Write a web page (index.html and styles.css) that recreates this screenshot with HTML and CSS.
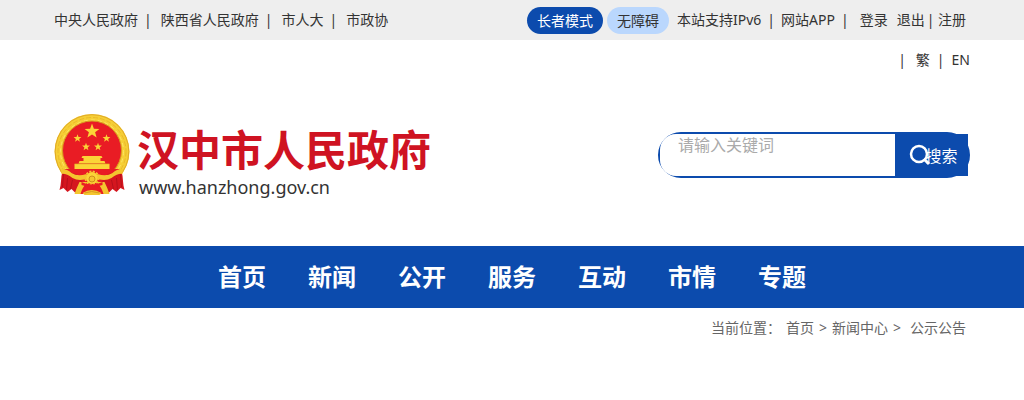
FILE: index.html
```
<!DOCTYPE html>
<html lang="zh-CN">
<head>
    <meta charset="UTF-8">
    <meta name="viewport" content="width=device-width, initial-scale=1.0">
    <title>汉中市人民政府</title>
    <link rel="stylesheet" href="styles.css">
</head>
<body>
    <!-- Top bar -->
    <div class="topbar">
        <div class="links">
            <a href="#">中央人民政府</a>
            <span class="sep">|</span>
            <a href="#">陕西省人民政府</a>
            <span class="sep">|</span>
            <a href="#">市人大</a>
            <span class="sep">|</span>
            <a href="#">市政协</a>
        </div>
        <div class="tools">
            <a class="pill pill-dark" href="#">长者模式</a>
            <a class="pill pill-light" href="#">无障碍</a>
            <div class="links">
                <a href="#">本站支持IPv6</a>
                <span class="bar">|</span>
                <a href="#">网站APP</a>
                <span class="bar">|</span>
            </div>
            <div class="user">
                <a href="#">登录</a>
                <a href="#">退出</a>
            </div>
            <div class="register">| <a href="#">注册</a></div>
        </div>
    </div>
    <div class="language">
        <span>|</span>
        <a class="traditional" href="#">繁</a>
        <span>|</span>
        <a href="#">EN</a>
    </div>

    <!-- Logo and search -->
    <header class="header">
        <a class="logo" href="#">
            <svg class="emblem" viewBox="0 0 76 82" aria-hidden="true">
                <!-- wheat ring -->
                <circle cx="37.500" cy="37.500" r="37.500" fill="#f6cf35"/>
                <circle cx="37.500" cy="37.500" r="36.800" fill="none" stroke="#e0a928"/>
                <circle cx="37.500" cy="37.500" r="34" fill="none" stroke="#ebb92c" stroke-dasharray="5 2"/>
                <circle cx="37.500" cy="37.500" r="31.500" fill="none" stroke="#fde566" stroke-dasharray="4 3"/>
                <circle cx="37.500" cy="36.500" r="29.500" fill="#e91c24" stroke="#d99a20"/>
                <!-- stars -->
                <g fill="#fbd437">
                    <path d="M37.500 9.500l1.900 5.200 5.500.2-4.300 3.400 1.500 5.300-4.600-3-4.600 3 1.500-5.300-4.300-3.400 5.500-.2z"/>
                    <path d="M23 20.300l1 2.700 2.900.1-2.300 1.800.8 2.800-2.400-1.600-2.400 1.600.8-2.800-2.300-1.800 2.900-.1z"/>
                    <path d="M52 20.300l1 2.700 2.900.1-2.300 1.800.8 2.800-2.400-1.600-2.400 1.600.8-2.800-2.300-1.800 2.900-.1z"/>
                    <path d="M31.500 28.800l1 2.700 2.900.1-2.300 1.800.8 2.800-2.400-1.600-2.400 1.600.8-2.800-2.300-1.800 2.900-.1z"/>
                    <path d="M43.500 28.800l1 2.700 2.900.1-2.300 1.800.8 2.800-2.400-1.600-2.400 1.600.8-2.800-2.300-1.800 2.900-.1z"/>
                    <!-- gate -->
                    <path d="M28 42h19l1 2H27zM29 44h17v3H29zM25 47h25l1 2.500H24zM20 50h35v5H20z"/>
                </g>
                <path d="M20 49.800h35" stroke="#d99a20" stroke-width=".6"/>
                <!-- ribbons -->
                <path d="M10 55h55v5L53 72v8H22v-8L10 60z" fill="#e91c24"/>
                <path d="M8 57C6 64 7 70 5 76l4-2 4 4 4-3 5 5 6-12-6-8zM67 57c2 7 1 13 3 19l-4-2-4 4-4-3-5 5-6-12 6-8z" fill="#d5161f"/>
                <path d="M9 60l-1 13M13 64l-1 12M18 66l-2 9M66 60l1 13M62 64l1 12M57 66l2 9" fill="none" stroke="#a80f18" stroke-width=".7"/>
                <path d="M7 55q6 0 10 4 6 4 15 1l2 4q-9 4-16 0-7-5-11-4zM68 55q-6 0-10 4-6 4-15 1l-2 4q9 4 16 0 7-5 11-4z" fill="#f4c62f"/>
                <path d="M25 68q-3 6-5 12h6q2-7 7-12zM50 68q3 6 5 12h-6q-2-7-7-12z" fill="#f4c62f"/>
                <path d="M28 79q9-6 19 0l-2 2H30z" fill="#f4c62f"/>
                <path d="M30 79q7-3 15 0" fill="none" stroke="#d99a20"/>
                <!-- gear -->
                <circle cx="37.500" cy="64" r="6" fill="#fbd437"/>
                <circle cx="37.500" cy="64" r="6.500" fill="none" stroke="#f4c62f" stroke-width="2" stroke-dasharray="2 1.400"/>
                <circle cx="37.500" cy="65" r="3" fill="#f4c62f" stroke="#cf8f1c"/>
                <path d="M27 68q10 5 21 0v3q-11 4-21 0z" fill="#e91c24"/>
            </svg>
            <span class="logo-text">
                <strong class="name">汉中市人民政府</strong>
                <span class="domain">www.hanzhong.gov.cn</span>
            </span>
        </a>
        <form class="search">
            <input class="keyword" type="text" aria-label="请输入关键词" placeholder="请输入关键词">
            <button class="search-button" type="button">
                <svg class="search-icon" viewBox="0 0 22 22" aria-hidden="true">
                    <circle cx="10" cy="10" r="8" fill="none" stroke="#fff" stroke-width="2.500"/>
                    <path d="M15 15l5 5" stroke="#fff" stroke-width="3"/>
                </svg>
                <span class="search-label">搜索</span>
            </button>
        </form>
    </header>

    <!-- Main navigation -->
    <nav class="nav">
        <a href="#">首页</a>
        <a href="#">新闻</a>
        <a href="#">公开</a>
        <a href="#">服务</a>
        <a href="#">互动</a>
        <a href="#">市情</a>
        <a href="#">专题</a>
    </nav>

    <!-- Breadcrumb -->
    <div class="breadcrumb">
        <span>当前位置：</span>
        <a href="#">首页</a>
        <span>&gt;</span>
        <a href="#">新闻中心</a>
        <span>&gt;</span>
        <a class="current" href="#">公示公告</a>
    </div>
</body>
</html>
```
FILE: styles.css
```
* {
    box-sizing: border-box;
}
body {
    margin: 0;
    font-family: "Noto Sans", "Noto Sans CJK SC", sans-serif;
    font-size: 14px;
    line-height: 20px;
    color: #333;
    background: #fff;
}
a {
    color: inherit;
    text-decoration: none;
}
.topbar {
    display: flex;
    justify-content: space-between;
    align-items: center;
    height: 40px;
    padding: 0 58px 0 54px;
    background: #eee;
}
.links, .tools, .user {
    display: flex;
    align-items: center;
}
.sep {
    padding: 0 9px 0 6px;
}
.bar {
    padding: 0 6px;
}
.pill {
    margin-right: 4px;
    padding: 4px 10px;
    border-radius: 14px;
    line-height: 19px;
}
.pill-dark {
    background: #0c4bad;
    color: #fff;
}
.pill-light {
    margin-right: 8px;
    background: #bad7fd;
}
.user {
    gap: 9px;
    margin: 0 2px 0 5px;
}
.language {
    display: flex;
    justify-content: flex-end;
    gap: 7px;
    padding: 10px 54px;
}
.traditional {
    padding-left: 3px;
}
.header {
    display: flex;
    justify-content: space-between;
    align-items: center;
    padding: 32px 54px 48px;
}
.logo {
    display: flex;
    align-items: center;
    gap: 6px;
}
.emblem {
    width: 77px;
    height: 82px;
}
.logo-text {
    display: flex;
    flex-direction: column;
    padding-top: 16px;
}
.name {
    font-family: "Liberation Sans", "Noto Sans CJK SC", sans-serif;
    font-size: 42px;
    line-height: 48px;
    color: #cf1322;
}
.domain {
    padding-left: 2px;
    font-size: 18px;
    line-height: 22px;
}
.search {
    display: flex;
    width: 312px;
    height: 46px;
    border: 2px solid #0c4bad;
    border-radius: 23px;
    background: #0c4bad;
}
.keyword {
    flex: 1;
    min-width: 0;
    padding: 0 18px 20px;
    border: none;
    border-radius: 16px 0 0 16px;
    outline: none;
    background: #fff;
    font-family: inherit;
    font-size: 16px;
}
.keyword::placeholder {
    color: #aaa;
}
.search-button {
    display: flex;
    justify-content: center;
    align-items: center;
    width: 73px;
    padding: 0 0 0 4px;
    border: none;
    background: #0c4bad;
    color: #fff;
    font-family: inherit;
    font-size: 16px;
    cursor: pointer;
}
.search-icon {
    width: 22px;
    height: 22px;
}
.search-label {
    margin-left: -6px;
}
.nav {
    display: flex;
    justify-content: center;
    gap: 42px;
    background: #0c4bad;
    color: #fff;
    font-size: 24px;
    font-weight: bold;
    line-height: 62px;
}
.breadcrumb {
    display: flex;
    justify-content: flex-end;
    gap: 5px;
    padding: 10px 58px;
    color: #666;
}
.current {
    padding-left: 4px;
}
```
